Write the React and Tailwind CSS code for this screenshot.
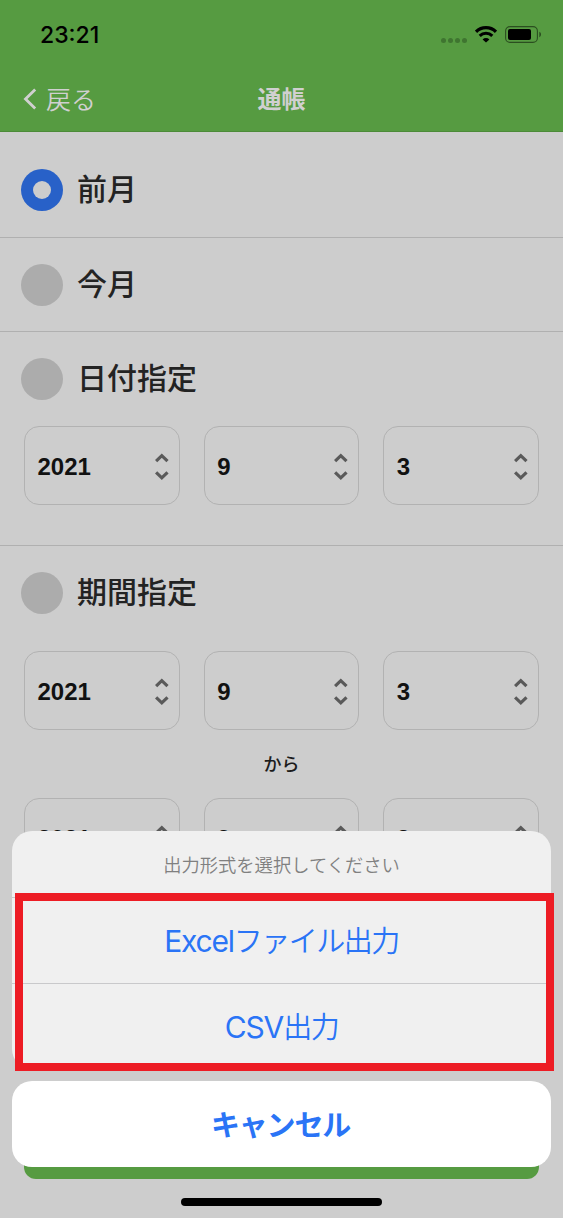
import { useState } from 'react';

const DATE = ['2021', '9', '3'];

function StatusBar() {
  return (
    <div className="flex h-[68px] items-center justify-between pl-[40px] pr-[21px]">
      <span className="mt-[2px] font-[Inter] text-[23px] font-medium leading-none text-black">23:21</span>
      <div className="flex items-center">
        <div className="mr-[8px] mt-[12px] flex gap-[2px]">
          {[0, 1, 2, 3].map((i) => <span key={i} className="size-[5px] rounded-full bg-[#3f7530]" />)}
        </div>
        <svg width="22" height="17" viewBox="0 0 22 17" className="mr-[8px]" fill="none" stroke="#000">
          <path d="M1 5.8a14.2 14.2 0 0 1 20 0" strokeWidth="3.2" />
          <path d="M4.7 9.9a8.9 8.9 0 0 1 12.6 0" strokeWidth="3" />
          <path d="M11 16.6 7.6 13.4a4.8 4.8 0 0 1 6.8 0Z" fill="#000" stroke="none" />
        </svg>
        <svg width="37" height="17" viewBox="0 0 37 17">
          <rect x="0.6" y="0.6" width="31.8" height="15.8" rx="4.4" fill="none" stroke="#2b4e20" strokeWidth="1.1" />
          <rect x="3" y="3" width="23" height="11" rx="2" fill="#000" />
          <path d="M34.3 5.8c2.3.9 2.3 4.5 0 5.4Z" fill="#2b4e20" />
        </svg>
      </div>
    </div>
  );
}

function Header() {
  return (
    <header className="h-[132px] border-b border-[#4c8b38] bg-[#569b41]">
      <StatusBar />
      <div className="grid h-[62px] grid-cols-3 items-center text-[#d0d0d0]">
        <button className="flex items-center pl-[23px] text-[25px] font-[350] leading-none">
          <svg width="14" height="22" viewBox="0 0 14 22" className="mr-[9px]" fill="none" stroke="currentColor" strokeWidth="2.8">
            <path d="M12.2 1.5 2.5 11l9.7 9.5" />
          </svg>
          <span className="-mt-[2px]">戻る</span>
        </button>
        <h1 className="-mt-[2px] text-center text-[24px] font-bold leading-none">通帳</h1>
      </div>
    </header>
  );
}

function Option({ label, checked, onSelect }) {
  return (
    <button onClick={onSelect} className="flex items-center gap-[14px] pl-[21px]">
      <span className={`flex size-[42px] items-center justify-center rounded-full ${checked ? 'bg-[#2861c8]' : 'bg-[#acacac]'}`}>
        {checked && <span className="size-[18px] rounded-full bg-[#cdcdcd]" />}
      </span>
      <span className="-mt-[6px] text-[30px] font-medium leading-none text-[#232323]">{label}</span>
    </button>
  );
}

function DateSelects() {
  return (
    <div className="grid grid-cols-3 gap-6 px-6">
      {DATE.map((v) => (
        <div key={v} className="flex h-[79px] items-center justify-between rounded-[15px] border-[1.5px] border-[#b2b2b2] pl-[12.5px] pr-[9px]">
          <span className="mt-[2px] font-['Liberation_Sans'] text-[24px] font-bold leading-none text-[#111]">{v}</span>
          <svg width="15" height="28" viewBox="0 0 15 28" fill="none" stroke="#5a5a5a" strokeWidth="3.2" className="mt-[2px]">
            <path d="m1.1 8.1 5.7-5.5 5.7 5.5" />
            <path d="m1.1 19.3 5.7 5.5 5.7-5.5" />
          </svg>
        </div>
      ))}
    </div>
  );
}

function ActionSheet() {
  return (
    <div className="absolute inset-x-3 top-[831px] flex flex-col gap-[12px] text-[#2a74f6]">
      <div className="relative h-[238px] rounded-[20px] bg-[#f0f0f0]">
        <p className="flex h-[67px] items-center justify-center border-b border-[#c9c9cb] text-[18.3px] font-[350] leading-none text-[#808080]">
          出力形式を選択してください
        </p>
        <button className="flex h-[86px] w-full items-center justify-center border-b border-[#c9c9cb] text-[30px] leading-none">
          <span className="font-[Inter] tracking-[-1.2px]">Excel</span>
          <span className="-mt-[2px] text-[29px] font-[350] tracking-[-1.5px]">ファイル出力</span>
        </button>
        <button className="flex h-[85px] w-full items-center justify-center text-[30px] leading-none">
          <span className="font-[Inter] tracking-[-1.2px]">CSV</span>
          <span className="-mt-[2px] text-[29px] font-[350] tracking-[-1.5px]">出力</span>
        </button>
        <div className="pointer-events-none absolute left-[3px] top-[62px] h-[178px] w-[539px] border-8 border-[#ed1c24]" />
      </div>
      <button className="h-[86px] rounded-[20px] bg-white pb-[2px] pr-[2px] text-[29px] font-bold leading-none tracking-[-1.2px]">キャンセル</button>
    </div>
  );
}

export default function App() {
  const [selected, setSelected] = useState('前月');
  const option = (label) => (
    <Option label={label} checked={selected === label} onSelect={() => setSelected(label)} />
  );

  return (
    <div className="relative flex h-[1218px] w-[563px] flex-col overflow-hidden bg-[#cdcdcd] font-['Noto_Sans_CJK_JP',sans-serif]">
      <Header />
      <main className="flex flex-1 flex-col">
        <section className="h-[106px] border-b-[1.5px] border-[#b0b0b0] pt-[37px]">{option('前月')}</section>
        <section className="h-[94px] border-b-[1.5px] border-[#b0b0b0] pt-[26px]">{option('今月')}</section>
        <section className="flex h-[214px] flex-col gap-[26px] border-b-[1.5px] border-[#b0b0b0] pt-[26px]">
          {option('日付指定')}
          <DateSelects />
        </section>
        <section className="flex flex-col pt-[26px]">
          {option('期間指定')}
          <div className="mt-[37px]"><DateSelects /></div>
          <p className="flex h-[68px] items-center justify-center pb-[2px] text-[18px] font-medium leading-none text-[#1c1c1c]">から</p>
          <DateSelects />
        </section>
      </main>
      <footer className="flex flex-col items-center px-6 pb-3">
        <button aria-label="出力" className="h-[60px] w-full rounded-[12px] bg-[#569b41]" />
        <div className="mt-[19px] h-[8px] w-[201px] rounded-full bg-black" />
      </footer>
      <ActionSheet />
    </div>
  );
}
